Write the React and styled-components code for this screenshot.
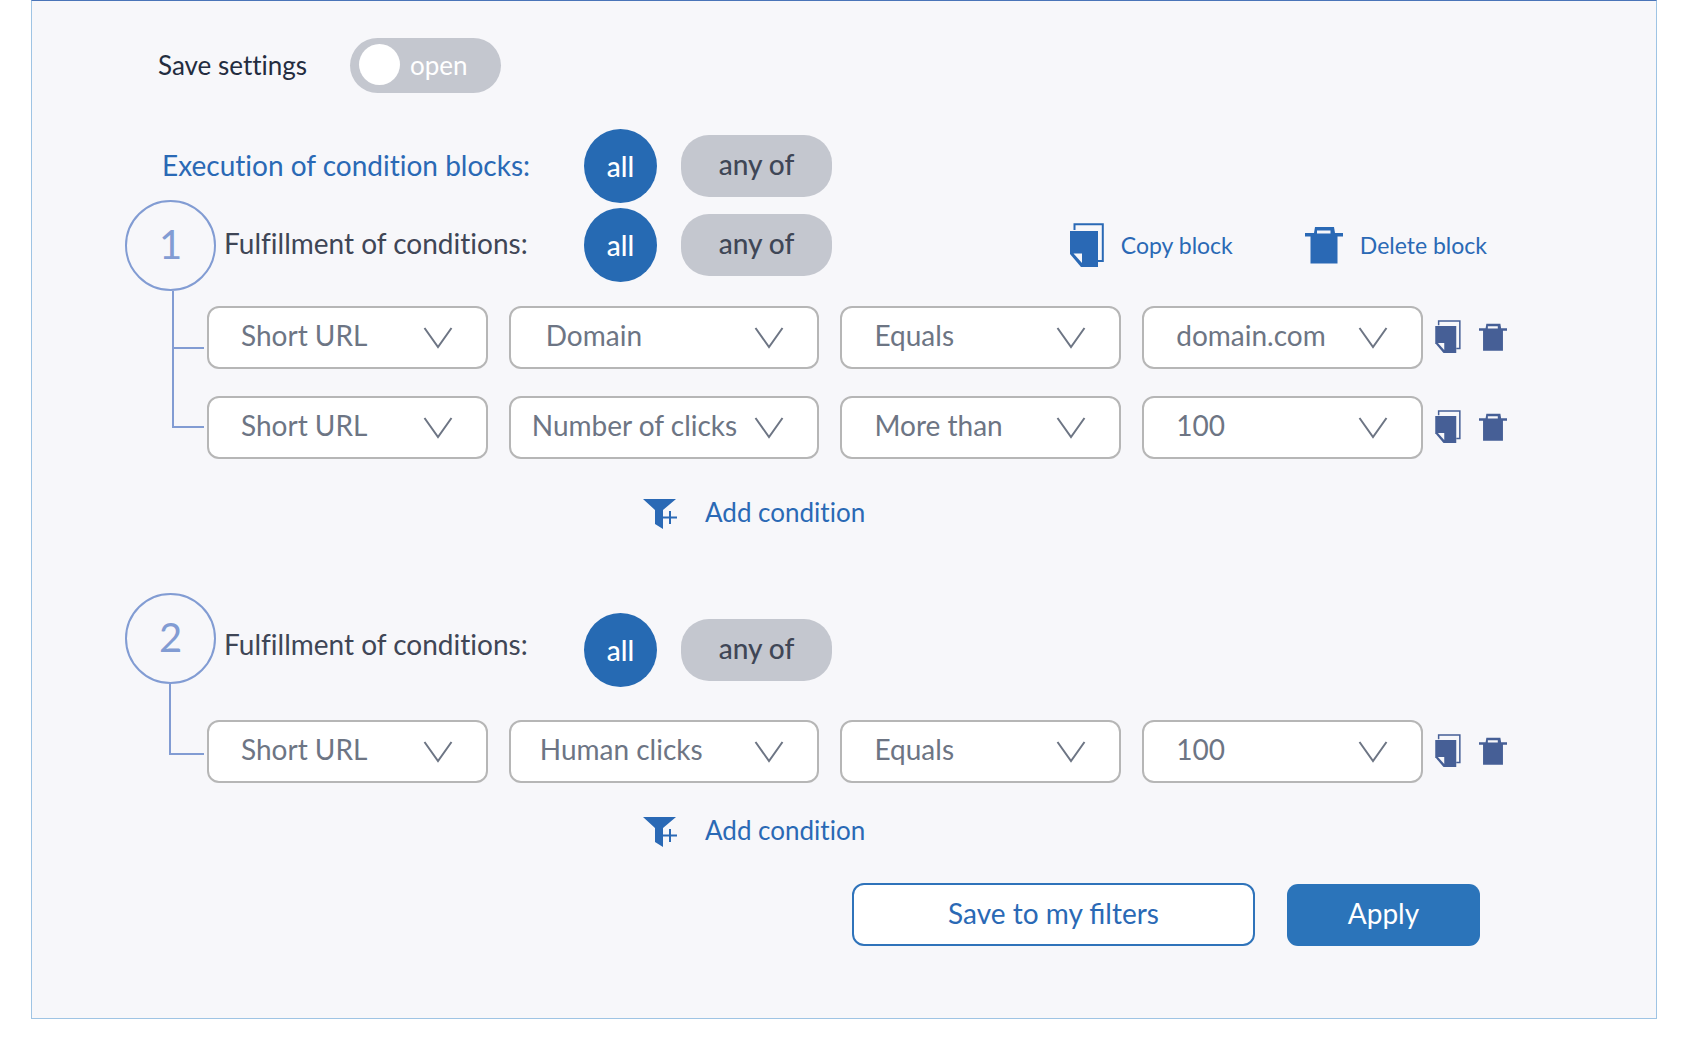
import React, { useState } from 'react'
import styled, { createGlobalStyle } from 'styled-components'

const blocks = [
  {
    id: 1,
    actions: true,
    rows: [
      { rise: 15, drop: 43, fields: ['Short URL', 'Domain', 'Equals', 'domain.com'] },
      { rise: 47, drop: 32, fields: ['Short URL', 'Number of clicks', 'More than', '100'] },
    ],
  },
  {
    id: 2,
    staggered: true,
    rows: [
      { rise: 36, drop: 35, fields: ['Short URL', 'Human clicks', 'Equals', '100'] },
    ],
  },
]

const fieldNames = ['Source', 'Parameter', 'Operator', 'Value']

const indents = { 'Domain': 35, 'Number of clicks': 21, 'Human clicks': 29 }

export default function App() {
  return (
    <>
      <GlobalStyle />
      <Panel>
        <SaveRow>
          <label htmlFor="save-settings">Save settings</label>
          <Switch>
            <input type="checkbox" id="save-settings" />
            <span>open</span>
          </Switch>
        </SaveRow>
        <ExecutionRow>
          <ExecutionLabel>Execution of condition blocks:</ExecutionLabel>
          <Match />
        </ExecutionRow>
        {blocks.map((block) => (
          <Block key={block.id} block={block} />
        ))}
        <Footer>
          <SaveButton type="button">Save to my filters</SaveButton>
          <ApplyButton type="button">Apply</ApplyButton>
        </Footer>
      </Panel>
    </>
  )
}

function Match() {
  const [mode, setMode] = useState('all')
  return (
    <MatchGroup>
      <AllButton type="button" aria-pressed={mode === 'all'} onClick={() => setMode('all')}>all</AllButton>
      <AnyButton type="button" aria-pressed={mode === 'any'} onClick={() => setMode('any')}>any of</AnyButton>
    </MatchGroup>
  )
}

function Block({ block }) {
  return (
    <BlockSection $first={block.id === 1}>
      <BlockHeader>
        <Badge>{block.id}</Badge>
        <BlockLabel $staggered={block.staggered}>Fulfillment of conditions:</BlockLabel>
        <MatchSlot $staggered={block.staggered}>
          <Match />
        </MatchSlot>
        {block.actions && (
          <BlockActions>
            <LinkButton type="button" $small><CopyIcon width="34" height="44" />Copy block</LinkButton>
            <LinkButton type="button" $small><TrashIcon width="38" height="38" />Delete block</LinkButton>
          </BlockActions>
        )}
      </BlockHeader>
      <Rows $staggered={block.staggered}>
        {block.rows.map((row, i) => (
          <Row key={i}>
            <Branch $rise={row.rise} $drop={row.drop} $staggered={block.staggered} />
            <Fields>
              {row.fields.map((value, j) => (
                <Field key={fieldNames[j]}>
                  <Select aria-label={fieldNames[j]} defaultValue={value} $indent={indents[value]}>
                    <option>{value}</option>
                  </Select>
                  <Chevron />
                </Field>
              ))}
            </Fields>
            <RowActions>
              <IconButton type="button" aria-label="Copy condition"><CopyIcon width="26" height="33" /></IconButton>
              <IconButton type="button" aria-label="Delete condition"><TrashIcon width="28" height="28" /></IconButton>
            </RowActions>
          </Row>
        ))}
      </Rows>
      <AddRow $staggered={block.staggered}>
        <LinkButton type="button" $wide><FilterPlusIcon />Add condition</LinkButton>
      </AddRow>
    </BlockSection>
  )
}

function CopyIcon(props) {
  return (
    <svg viewBox="0 0 34 44" aria-hidden="true" {...props}>
      <path d="M4.5 7V1.2H32.8V38H28" fill="none" stroke="currentColor" strokeWidth="2" />
      <path d="M0 8H28V44H11L0 31Z" fill="currentColor" />
      <path d="M3.5 30.5H12V40Z" fill="#f7f7fa" />
    </svg>
  )
}

function TrashIcon(props) {
  return (
    <svg viewBox="0 0 38 38" aria-hidden="true" {...props}>
      <path d="M9 7L10 1H29L30 7H38V10.5H32.5V37.5H5.5V10.5H0V7ZM12 4.5V7.5H25.5V4.5Z" fill="currentColor" fillRule="evenodd" />
    </svg>
  )
}

function FilterPlusIcon() {
  return (
    <svg width="34" height="36" viewBox="0 0 34 36" aria-hidden="true">
      <path d="M0 5H33L20 16V35L12 30V16Z" fill="currentColor" />
      <path d="M27 17V30M20 23.5H34" fill="none" stroke="currentColor" strokeWidth="2" />
    </svg>
  )
}

function Chevron() {
  return (
    <ChevronSvg width="30" height="22" viewBox="0 0 30 22" aria-hidden="true">
      <path d="M1.5 1L15 20L28.5 1" fill="none" stroke="currentColor" strokeWidth="2" />
    </ChevronSvg>
  )
}

const GlobalStyle = createGlobalStyle`
  * {
    box-sizing: border-box;
  }
  body {
    margin: 0;
    background: #fff;
    font-family: Lato, "Open Sans", sans-serif;
    font-size: 28px;
    line-height: 34px;
    font-variant-ligatures: no-common-ligatures;
    color: #3f4656;
  }
  button {
    font: inherit;
    font-variant-ligatures: inherit;
    border: 0;
    padding: 0;
    background: none;
    cursor: pointer;
  }
`

const Panel = styled.main`
  margin: 0 31px 30px;
  padding: 37px 149px 72px 93px;
  background: #f7f7fa;
  border: 1px solid #9fc4e4;
  border-top-color: #4a74b8;
`

const SaveRow = styled.div`
  display: flex;
  align-items: center;
  padding-left: 33px;
  font-size: 26px;
  color: #232c3f;
  > label:first-child {
    width: 192px;
    padding-bottom: 2px;
  }
`

const Switch = styled.label`
  display: flex;
  align-items: center;
  gap: 10px;
  width: 151px;
  height: 55px;
  padding: 0 9px 2px;
  border-radius: 28px;
  background: #c4c7cf;
  color: #fff;
  cursor: pointer;
  input {
    appearance: none;
    width: 41px;
    height: 41px;
    margin: 0;
    border-radius: 50%;
    background: #fff;
  }
`

const ExecutionRow = styled.div`
  display: flex;
  align-items: center;
  margin-top: 36px;
  padding-left: 37px;
`

const ExecutionLabel = styled.span`
  flex: 0 0 422px;
  padding-bottom: 2px;
  color: #2a69b5;
`

const MatchGroup = styled.div`
  display: flex;
  align-items: center;
  gap: 24px;
`

const AllButton = styled.button`
  width: 73px;
  height: 74px;
  border-radius: 50%;
  background: #266ab3;
  color: #fff;
  font-weight: 500;
`

const AnyButton = styled.button`
  width: 151px;
  height: 62px;
  padding-bottom: 5px;
  border-radius: 28px;
  background: #c4c7cf;
  color: #3f4656;
  font-weight: 500;
`

const BlockSection = styled.section`
  margin-top: ${({ $first }) => ($first ? '-3px' : '63px')};
`

const BlockHeader = styled.div`
  display: flex;
  align-items: flex-start;
`

const Badge = styled.span`
  display: flex;
  align-items: center;
  justify-content: center;
  width: 91px;
  height: 91px;
  padding-bottom: 4px;
  border: 2px solid #829cd3;
  border-radius: 50%;
  color: #829cd3;
  font-size: 40px;
`

const BlockLabel = styled.span`
  flex: 0 0 360px;
  margin: ${({ $staggered }) => ($staggered ? '34px' : '26px')} 0 0 8px;
`

const MatchSlot = styled.div`
  margin-top: ${({ $staggered }) => ($staggered ? '20px' : '8px')};
`

const BlockActions = styled.div`
  display: flex;
  align-items: center;
  gap: 72px;
  margin: 23px 20px 0 auto;
`

const LinkButton = styled.button`
  display: flex;
  align-items: center;
  gap: ${({ $wide }) => ($wide ? '28px' : '17px')};
  font-size: ${({ $small }) => ($small ? '23px' : '26px')};
  line-height: 32px;
  color: #2a69b5;
`

const Rows = styled.div`
  display: grid;
  gap: 27px;
  margin-top: ${({ $staggered }) => ($staggered ? '33px' : '15px')};
`

const Row = styled.div`
  display: grid;
  grid-template-columns: 82px 1fr auto;
  align-items: start;
`

/* elbow line from the badge (or the row above) to the row */
const Branch = styled.span`
  width: ${({ $staggered }) => ($staggered ? '35px' : '32px')};
  height: ${({ $rise, $drop }) => $rise + $drop}px;
  margin-top: -${({ $rise }) => $rise}px;
  margin-left: ${({ $staggered }) => ($staggered ? '44px' : '47px')};
  border-left: 2px solid #829cd3;
  border-bottom: 2px solid #829cd3;
`

const Fields = styled.div`
  display: grid;
  grid-template-columns: 281fr 311fr 281fr 281fr;
  gap: 21px;
`

const Field = styled.div`
  display: grid;
  align-items: center;
  color: #6d7584;
  > * {
    grid-area: 1 / 1;
  }
`

const Select = styled.select`
  appearance: none;
  width: 100%;
  min-width: 0;
  height: 63px;
  padding: 0 0 6px ${({ $indent = 32 }) => $indent}px;
  border: 2px solid #b6b6b6;
  border-radius: 12px;
  background: #fff;
  color: inherit;
  font: inherit;
`

const ChevronSvg = styled.svg`
  justify-self: end;
  margin-right: 35px;
  pointer-events: none;
`

const RowActions = styled.div`
  display: flex;
  align-items: center;
  gap: 18px;
  height: 63px;
  padding: 0 0 2px 12px;
`

const IconButton = styled.button`
  display: flex;
  color: #465f96;
`

const AddRow = styled.div`
  display: flex;
  margin-top: ${({ $staggered }) => ($staggered ? '29px' : '35px')};
  padding-left: 518px;
`

const Footer = styled.div`
  display: flex;
  align-items: flex-end;
  justify-content: flex-end;
  gap: 32px;
  margin-top: 35px;
  padding-right: 27px;
`

const SaveButton = styled.button`
  width: 403px;
  height: 63px;
  padding-bottom: 4px;
  border: 2px solid #2f73ba;
  border-radius: 12px;
  background: #fff;
  color: #2a69b5;
  font-variant-ligatures: normal;
`

const ApplyButton = styled.button`
  width: 193px;
  height: 62px;
  padding-bottom: 4px;
  border-radius: 11px;
  background: #2b74ba;
  color: #fff;
`
